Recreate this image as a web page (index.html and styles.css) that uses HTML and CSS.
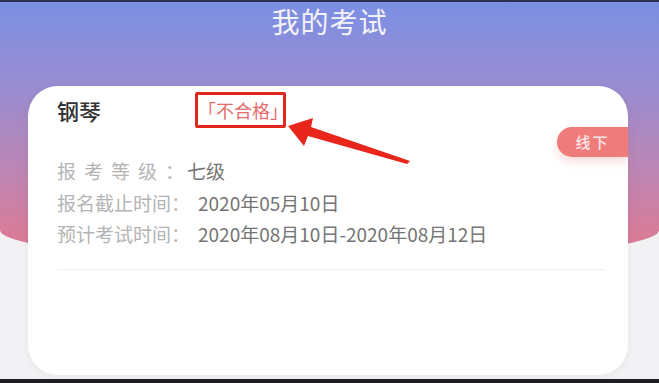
FILE: index.html
```html
<!DOCTYPE html>
<html lang="zh-CN">
<head>
    <meta charset="UTF-8">
    <meta name="viewport" content="width=device-width, initial-scale=1.0">
    <title>我的考试</title>
    <link rel="stylesheet" href="styles.css">
</head>
<body>
    <div class="screen">
        <div class="topbar"></div>
        <div class="main">
            <!-- 顶部渐变区域 -->
            <div class="header">
                <div class="header-title">我的考试</div>
            </div>
            <!-- 考试卡片 -->
            <div class="exam-card">
                <div class="exam-head">
                    <span class="exam-name">钢琴</span>
                    <span class="exam-result">「不合格」</span>
                </div>
                <div class="exam-tag">线下</div>
                <svg class="exam-arrow" width="135" height="55" viewBox="283 116 135 55">
                    <polygon points="288,126 313,118 311,127 410,161 407,164 308,136 304,146" fill="#e8261c"/>
                </svg>
                <div class="exam-info">
                    <div class="info-row"><span class="info-label short"><span class="spaced">报考等级</span>：</span><span class="info-value">七级</span></div>
                    <div class="info-row"><span class="info-label">报名截止时间：</span><span class="info-value">2020年05月10日</span></div>
                    <div class="info-row"><span class="info-label">预计考试时间：</span><span class="info-value">2020年08月10日-2020年08月12日</span></div>
                </div>
                <div class="exam-divider"></div>
            </div>
        </div>
        <div class="bottombar"></div>
    </div>
</body>
</html>
```

FILE: styles.css
```css
body {
    margin: 0;
    padding: 0;
    font-family: 'Noto Sans CJK SC', 'Noto Sans', sans-serif;
    background: #f2f2f4;
    overflow: hidden;
}
.screen {
    width: 659px;
    height: 383px;
    display: flex;
    flex-direction: column;
}
.topbar {
    height: 2px;
    background: #2c3150;
}
.main {
    flex-grow: 1;
    display: flex;
    flex-direction: column;
    background: #f2f2f4;
}
.bottombar {
    height: 4px;
    background: #1e1e22;
}
.header {
    height: 260px;
    background: linear-gradient(180deg, #7b8fe3 0%, #9c8cd0 35%, #bd86b4 65%, #e4788e 100%);
    border-radius: 0 0 50% 50% / 0 0 32px 32px;
    text-align: center;
}
.header-title {
    font-size: 28px;
    line-height: 38px;
    color: #f4f2fb;
    letter-spacing: 1px;
}
.exam-card {
    position: relative;
    margin: -176px 31px 0 28px;
    height: 289px;
    background: #ffffff;
    border-radius: 30px;
    box-shadow: 0 2px 10px rgba(0, 0, 0, 0.05);
    padding: 6px 23px 0 29px;
    box-sizing: border-box;
}
.exam-head {
    display: flex;
    align-items: center;
    height: 36px;
}
.exam-name {
    font-size: 22px;
    font-weight: 500;
    color: #333333;
    width: 138px;
}
.exam-result {
    display: flex;
    align-items: center;
    justify-content: center;
    width: 85px;
    height: 30px;
    border: 3px solid #e0261e;
    border-radius: 2px;
    font-size: 18px;
    color: #e56a6a;
}
.exam-tag {
    position: absolute;
    top: 41px;
    right: 0;
    width: 71px;
    height: 30px;
    background: #f07b7b;
    border-radius: 15px 0 0 15px;
    color: #fde8e8;
    font-size: 15px;
    font-weight: 500;
    line-height: 30px;
    text-align: center;
    letter-spacing: 2px;
    box-shadow: 0 5px 9px rgba(240, 120, 120, 0.25);
}
.exam-arrow {
    position: absolute;
    left: 255px;
    top: 30px;
}
.exam-info {
    margin-top: 27px;
}
.info-row {
    font-size: 19px;
    line-height: 31.5px;
    white-space: nowrap;
}
.info-label {
    color: #b4b4b4;
    margin-right: 8px;
}
.info-label.short {
    margin-right: 3px;
}
.info-label .spaced {
    letter-spacing: 8px;
}
.info-value {
    color: #747474;
}
.exam-divider {
    margin-top: 19px;
    height: 1px;
    background: #efefef;
}
```
